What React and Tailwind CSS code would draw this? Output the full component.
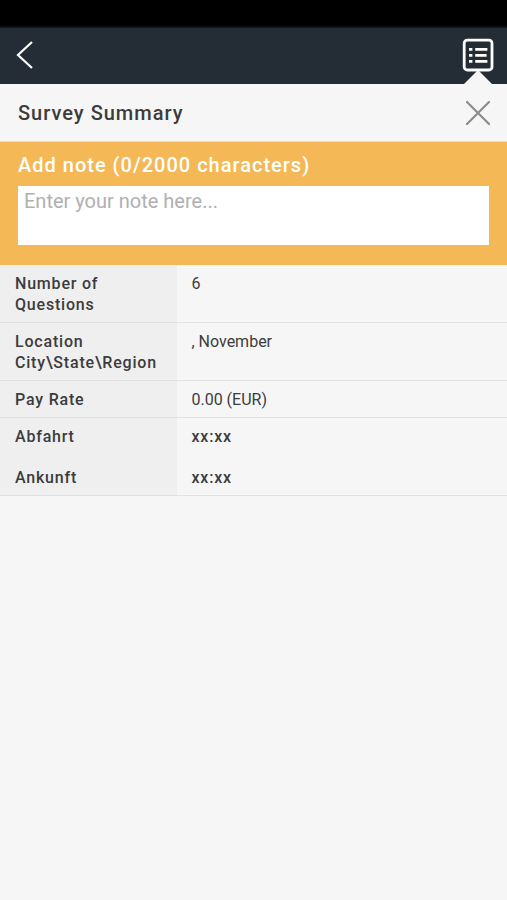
import React, { useState } from 'react'

const MAX_NOTE = 2000

const rows = [
  { label: 'Number of Questions', value: '6' },
  { label: 'Location City\\State\\Region', value: ', November' },
  { label: 'Pay Rate', value: '0.00 (EUR)' },
  { label: 'Abfahrt', value: 'xx:xx', bold: true, joined: true },
  { label: 'Ankunft', value: 'xx:xx', bold: true }
]

function BackIcon() {
  return (
    <svg viewBox="0 0 18 28" className="w-[18px] h-7" fill="none" stroke="currentColor" strokeWidth="2.2">
      <path d="M16 1 L2 14 L16 27" />
    </svg>
  )
}

function ListIcon() {
  return (
    <svg viewBox="0 0 32 34" className="w-8 h-[34px]" fill="none" stroke="currentColor">
      <rect x="2.2" y="2.2" width="27.8" height="29.8" rx="3" strokeWidth="2.8" />
      <path d="M7 11.3h3.4M7 17.3h3.4M7 23.3h3.4" strokeWidth="2.8" />
      <path d="M13.2 11.3h12.2M13.2 17.3h11.4M13.2 23.3h12.2" strokeWidth="2.8" />
    </svg>
  )
}

function CloseIcon() {
  return (
    <svg viewBox="0 0 26 26" className="w-[26px] h-[26px]" fill="none" stroke="currentColor" strokeWidth="2.2">
      <path d="M2 2 L24 24 M24 2 L2 24" strokeLinecap="round" />
    </svg>
  )
}

export default function App() {
  const [note, setNote] = useState('')

  return (
    <div className="min-h-screen bg-[#f6f6f6] font-['Roboto',sans-serif] text-[#3c3c3c]">
      {/* Status bar */}
      <div className="h-7 bg-gradient-to-b from-black from-85% to-[#1a2027]" />

      {/* Top bar */}
      <header className="relative h-14 bg-[#242c35] text-white flex items-center justify-between pl-4 pr-[13px] pb-[3px]">
        <button type="button" aria-label="Back">
          <BackIcon />
        </button>
        <button type="button" aria-label="Survey summary">
          <ListIcon />
        </button>
        <svg viewBox="0 0 28 14" className="absolute bottom-0 right-[15px] w-7 h-[14px]">
          <path d="M0 14 L14 0 L28 14 Z" fill="#f6f6f6" />
        </svg>
      </header>

      <main>
        <div className="h-[58px] flex items-center justify-between pl-[18px] pr-4 border-b border-[#e9dfd0]">
          <h1 className="text-xl font-medium tracking-wider">Survey Summary</h1>
          <button type="button" aria-label="Close" className="text-[#8c8c8c]">
            <CloseIcon />
          </button>
        </div>

        {/* Note */}
        <section className="bg-[#f4b857] px-[18px] pt-[7px] pb-5">
          <label htmlFor="note" className="block text-xl leading-8 font-medium tracking-wider text-white pb-[5px]">
            Add note ({note.length}/{MAX_NOTE} characters)
          </label>
          <textarea
            id="note"
            value={note}
            maxLength={MAX_NOTE}
            onChange={(e) => setNote(e.target.value)}
            placeholder="Enter your note here..."
            className="block w-full h-[59px] resize-none bg-white px-1.5 py-[3px] text-xl leading-6 placeholder:text-[#b0b0b0] outline-none"
          />
        </section>

        {/* Details */}
        <table className="w-full table-fixed border-separate border-spacing-0 text-base leading-[21px] text-left">
          <tbody>
            {rows.map((row) => (
              <tr key={row.label} className="align-top">
                <th
                  scope="row"
                  className={`w-[35%] bg-[#efefef] pl-[15px] pr-2 pt-2 font-medium tracking-wider ${
                    row.joined ? 'pb-3' : 'pb-[7px] border-b border-[#e2e2e2]'
                  }`}
                >
                  {row.label}
                </th>
                <td
                  className={`pl-[14px] pr-2 pt-2 ${row.bold ? 'font-medium tracking-wider' : ''} ${
                    row.joined ? 'pb-3' : 'pb-[7px] border-b border-[#e2e2e2]'
                  }`}
                >
                  {row.value}
                </td>
              </tr>
            ))}
          </tbody>
        </table>
      </main>
    </div>
  )
}
